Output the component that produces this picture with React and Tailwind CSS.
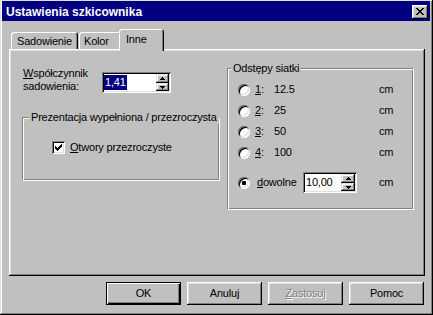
import React from "react";

const raised =
  "shadow-[inset_-1px_-1px_0_#000,inset_1px_1px_0_#fff,inset_-2px_-2px_0_#808080,inset_2px_2px_0_#dfdfdf]";
const raisedSmall =
  "shadow-[inset_-1px_-1px_0_#000,inset_1px_1px_0_#dfdfdf,inset_-2px_-2px_0_#808080,inset_2px_2px_0_#fff]";
const sunken =
  "shadow-[inset_1px_1px_0_#808080,inset_-1px_-1px_0_#fff,inset_2px_2px_0_#000,inset_-2px_-2px_0_#dfdfdf]";
const etched =
  "border border-t-[#808080] border-l-[#808080] border-r-white border-b-white shadow-[inset_1px_1px_0_#fff,inset_-1px_-1px_0_#808080]";

function UpArrow() {
  return (
    <svg width="5" height="3" viewBox="0 0 5 3" shapeRendering="crispEdges">
      <path d="M2 0h1v1H2zM1 1h3v1H1zM0 2h5v1H0z" fill="#000" />
    </svg>
  );
}
function DownArrow() {
  return (
    <svg width="5" height="3" viewBox="0 0 5 3" shapeRendering="crispEdges">
      <path d="M0 0h5v1H0zM1 1h3v1H1zM2 2h1v1H2z" fill="#000" />
    </svg>
  );
}

function Spin({ w, btnW, extra, children }) {
  return (
    <div className={`h-[21px] bg-white ${sunken} flex p-[2px] ${w} ${extra || ""}`}>
      <div className="flex-1 flex items-center">{children}</div>
      <div className={`flex flex-col ${btnW}`}>
        <div className={`h-[9px] bg-[#c0c0c0] ${raisedSmall} flex items-center justify-center`}>
          <UpArrow />
        </div>
        <div className={`h-[8px] bg-[#c0c0c0] ${raisedSmall} flex items-center justify-center`}>
          <DownArrow />
        </div>
      </div>
    </div>
  );
}

function Radio({ checked }) {
  return (
    <span
      className={`w-[12px] h-[12px] shrink-0 rounded-full bg-white flex items-center justify-center shadow-[inset_1px_1px_0_#808080,inset_-1px_-1px_0_#fff,inset_2px_2px_0_#000,inset_-2px_-2px_0_#dfdfdf]`}
    >
      {checked && <span className="w-[4px] h-[4px] rounded-[1px] bg-black" />}
    </span>
  );
}

function Button({ children, def, disabled }) {
  return (
    <div
      className={`w-[75px] h-[23px] flex items-center justify-center ${
        def
          ? "border border-black shadow-[inset_1px_1px_0_#fff,inset_-1px_-1px_0_#000,inset_-2px_-2px_0_#808080]"
          : raised
      } ${disabled ? "text-[#808080] [text-shadow:1px_1px_0_#fff]" : ""}`}
    >
      {children}
    </div>
  );
}

export default function App() {
  return (
    <div className="w-[433px] h-[315px] overflow-hidden bg-[#c0c0c0] flex flex-col pt-[1px] pl-[2px] pr-[3px] shadow-[inset_-1px_-1px_0_#000,inset_1px_1px_0_#dfdfdf,inset_-2px_-2px_0_#808080,inset_2px_2px_0_#fff] font-['Liberation_Sans',Arial,sans-serif] text-[11px] leading-[13px] tracking-[-0.2px] text-black">
      {/* Title bar */}
      <div className="h-[20px] shrink-0 bg-[#000080] flex items-start justify-between pl-[4px] pr-[2px]">
        <span className="pt-[4px] text-white font-bold text-[12px] leading-[15px] tracking-normal whitespace-nowrap">
          Ustawienia szkicownika
        </span>
        <div className={`mt-[4px] w-[16px] h-[14px] bg-[#c0c0c0] ${raised} flex items-start`}>
          <svg
            className="ml-[4px] mt-[3px]"
            width="8"
            height="7"
            viewBox="0 0 8 7"
            shapeRendering="crispEdges"
          >
            <path
              d="M0 0h2v1H0zM6 0h2v1H6zM1 1h2v1H1zM5 1h2v1H5zM2 2h4v1H2zM3 3h2v1H3zM2 4h4v1H2zM1 5h2v1H1zM5 5h2v1H5zM0 6h2v1H0zM6 6h2v1H6z"
              fill="#000"
            />
          </svg>
        </div>
      </div>

      {/* Tabs */}
      <div className="mt-[8px] h-[20px] shrink-0 flex items-end pl-[9px] relative z-10">
        <div className="w-[67px] h-[17px] pl-[6px] pt-[3px] bg-[#c0c0c0] rounded-t-[3px] whitespace-nowrap shadow-[inset_1px_1px_0_#fff,inset_-1px_0_0_#000,inset_-2px_0_0_#808080]">
          Sadowienie
        </div>
        <div className="ml-[1px] w-[42px] h-[17px] pl-[5px] pt-[3px] bg-[#c0c0c0] rounded-t-[3px] whitespace-nowrap shadow-[inset_1px_1px_0_#fff,inset_-1px_0_0_#000,inset_-2px_0_0_#808080]">
          Kolor
        </div>
        <div className="ml-[-2px] w-[45px] h-[22px] mb-[-2px] pl-[7px] pt-[4px] bg-[#c0c0c0] rounded-t-[3px] whitespace-nowrap relative z-10 shadow-[inset_1px_1px_0_#fff,inset_-1px_0_0_#000,inset_-2px_0_0_#808080]">
          Inne
        </div>
      </div>

      {/* Panel */}
      <div className={`ml-[7px] w-[416px] h-[227px] shrink-0 ${raised} flex items-start pl-[13px] pt-[13px]`}>
        {/* Left column */}
        <div className="mt-[5px] w-[197px] flex flex-col">
          <div className="flex items-start">
            <div className="w-[80px] pl-[1px] whitespace-nowrap">
              <u>W</u>spółczynnik
              <br />
              sadowienia:
            </div>
            <Spin w="w-[69px]" btnW="w-[13px]" extra="mt-[5px]">
              <span className="bg-[#000080] text-white px-[1px] leading-[15px]">1,41</span>
            </Spin>
          </div>
          <fieldset className={`mt-[18px] h-[70px] w-[197px] ${etched}`}>
            <legend className="ml-[6px] px-[2px] bg-[#c0c0c0] whitespace-nowrap">
              Prezentacja wypełniona / przezroczysta
            </legend>
            <div className="pt-[16px] pl-[29px] flex items-center">
              <span
                className={`w-[13px] h-[13px] shrink-0 bg-white ${sunken} flex items-start`}
              >
                <svg
                  className="ml-[3px] mt-[3px]"
                  width="7"
                  height="7"
                  viewBox="0 0 7 7"
                  shapeRendering="crispEdges"
                >
                  <path
                    d="M0 2h1v3H0zM1 3h1v3H1zM2 4h1v3H2zM3 3h1v3H3zM4 2h1v3H4zM5 1h1v3H5zM6 0h1v3H6z"
                    fill="#000"
                  />
                </svg>
              </span>
              <span className="ml-[5px] pt-[1px] whitespace-nowrap">
                <u>O</u>twory przezroczyste
              </span>
            </div>
          </fieldset>
        </div>

        {/* Right group */}
        <fieldset className={`ml-[8px] w-[187px] h-[148px] ${etched}`}>
          <legend className="ml-[3px] px-[2px] bg-[#c0c0c0] whitespace-nowrap">Odstępy siatki</legend>
          <div className="pt-[4px] pl-[10px] flex flex-col">
            {[
              ["1", "12.5"],
              ["2", "25"],
              ["3", "50"],
              ["4", "100"],
            ].map(([k, v]) => (
              <div key={k} className="h-[21px] flex items-center whitespace-nowrap">
                <Radio />
                <span className="ml-[5px] w-[19px]">
                  <u>{k}</u>:
                </span>
                <span className="w-[105px]">{v}</span>
                <span>cm</span>
              </div>
            ))}
            <div className="mt-[9px] h-[21px] flex items-center whitespace-nowrap">
              <Radio checked />
              <span className="ml-[7px] w-[46px]">
                <u>d</u>owolne
              </span>
              <Spin w="w-[54px]" btnW="w-[14px]">
                <span className="pl-[1px]">10,00</span>
              </Spin>
              <span className="ml-[22px]">cm</span>
            </div>
          </div>
        </fieldset>
      </div>

      {/* Buttons */}
      <div className="mt-[6px] flex gap-[6px] pl-[104px]">
        <Button def>OK</Button>
        <Button>Anuluj</Button>
        <Button disabled>
          <span>
            <u>Z</u>astosuj
          </span>
        </Button>
        <Button>Pomoc</Button>
      </div>
    </div>
  );
}
